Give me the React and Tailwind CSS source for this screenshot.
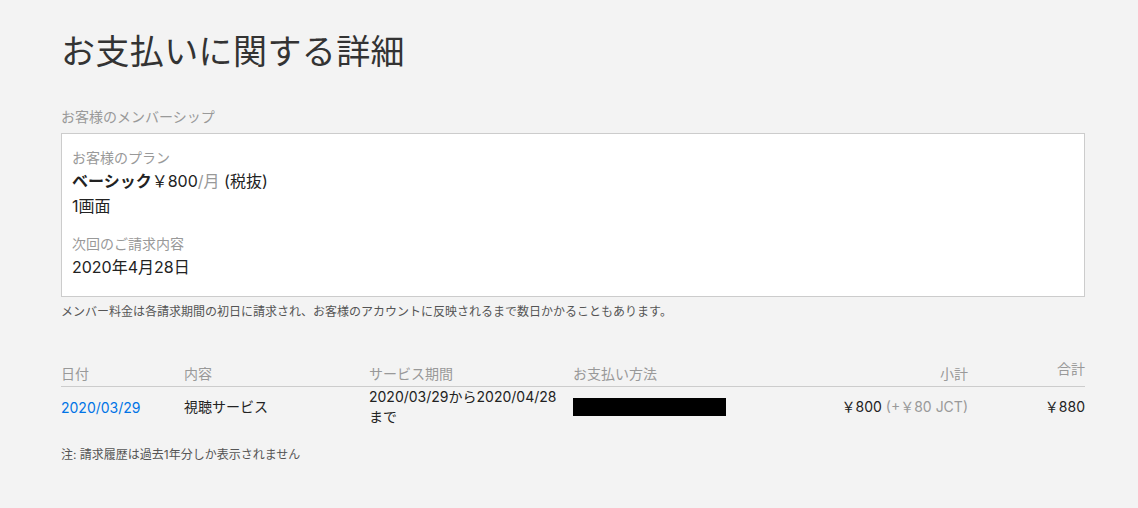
import React from 'react';

const font = { fontFamily: 'Inter, "Noto Sans CJK JP", "Noto Sans", sans-serif' };

function Field({ label, children }) {
  return (
    <div>
      <div className="text-[14px] leading-[20px] text-[#999]">{label}</div>
      {children}
    </div>
  );
}

export default function App() {
  return (
    <div className="min-h-[508px] bg-[#f3f3f3] text-[#222]" style={font}>
      <div className="w-[1024px] ml-[61px] pt-[28px]">
        <h1 className="text-[34px] tracking-[0.4px] leading-[48px] text-[#333] font-normal">お支払いに関する詳細</h1>

        <div className="mt-[31px] text-[14px] leading-[20px] text-[#999]">お客様のメンバーシップ</div>

        <div className="mt-[6px] bg-white border border-[#ccc] px-[10px] pt-[14px] pb-[16px]">
          <Field label="お客様のプラン">
            <div className="text-[16px] leading-[25px] mt-[1px]">
              <span className="font-bold">ベーシック</span>￥800<span className="text-[#999]">/月</span> (税抜)
            </div>
            <div className="text-[16px] leading-[25px]">1画面</div>
          </Field>
          <div className="mt-[15px]">
            <Field label="次回のご請求内容">
              <div className="text-[16px] leading-[25px] mt-[1px]">2020年4月28日</div>
            </Field>
          </div>
        </div>

        <p className="mt-[6px] text-[12px] leading-[17px] text-[#555]">
          メンバー料金は各請求期間の初日に請求され、お客様のアカウントに反映されるまで数日かかることもあります。
        </p>

        <div className="mt-[44px]">
          <div className="grid grid-cols-[123px_185px_204px_200px_195px_117px] items-end border-b border-[#ccc] pb-[2px] text-[14px] leading-[20px] text-[#999]">
            <div>日付</div>
            <div>内容</div>
            <div>サービス期間</div>
            <div>お支払い方法</div>
            <div className="text-right">小計</div>
            <div className="text-right self-start -mt-[5px]">合計</div>
          </div>
          <div className="grid grid-cols-[123px_185px_204px_200px_195px_117px] items-center text-[14px] leading-[20px] text-[#222]">
            <a className="text-[#0073e6] mt-[2px]" href="#">2020/03/29</a>
            <div>視聴サービス</div>
            <div className="pr-[10px]">
              2020/03/29から2020/04/28<span className="whitespace-nowrap">まで</span>
            </div>
            <div>
              <div className="w-[153px] h-[18px] bg-black" />
            </div>
            <div className="text-right">
              ￥800 <span className="text-[#999]">(+￥80 JCT)</span>
            </div>
            <div className="text-right">￥880</div>
          </div>
        </div>

        <p className="mt-[19px] text-[12px] leading-[17px] text-[#555]">注: 請求履歴は過去1年分しか表示されません</p>
      </div>
    </div>
  );
}
